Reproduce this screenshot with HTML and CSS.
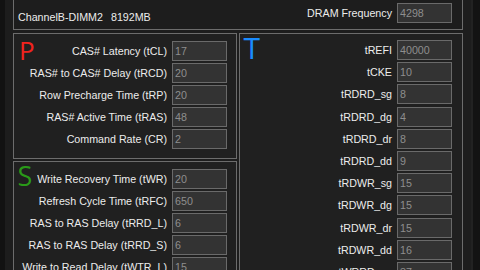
FILE: index.html
```html
<!DOCTYPE html>
<html lang="en">
<head>
  <meta charset="UTF-8">
  <meta name="viewport" content="width=device-width, initial-scale=1.0">
  <title>Memory Timings</title>
  <link rel="stylesheet" href="styles.css">
</head>
<body>
  <div class="edge"></div>
  <div class="main">
    <div class="summary">
      <div class="module">ChannelB-DIMM2<span class="size">8192MB</span></div>
      <div class="row freq">
        <span class="label">DRAM Frequency</span>
        <span class="val">4298</span>
      </div>
    </div>
    <div class="groups">
      <div class="col">
        <section class="panel primary">
          <span class="mark red">P</span>
          <div class="row"><span class="label">CAS# Latency (tCL)</span><span class="val">17</span></div>
          <div class="row"><span class="label">RAS# to CAS# Delay (tRCD)</span><span class="val">20</span></div>
          <div class="row"><span class="label">Row Precharge Time (tRP)</span><span class="val">20</span></div>
          <div class="row"><span class="label">RAS# Active Time (tRAS)</span><span class="val">48</span></div>
          <div class="row"><span class="label">Command Rate (CR)</span><span class="val">2</span></div>
        </section>
        <section class="panel secondary">
          <span class="mark green">S</span>
          <div class="row"><span class="label">Write Recovery Time (tWR)</span><span class="val">20</span></div>
          <div class="row"><span class="label">Refresh Cycle Time (tRFC)</span><span class="val">650</span></div>
          <div class="row"><span class="label">RAS to RAS Delay (tRRD_L)</span><span class="val">6</span></div>
          <div class="row"><span class="label">RAS to RAS Delay (tRRD_S)</span><span class="val">6</span></div>
          <div class="row"><span class="label">Write to Read Delay (tWTR_L)</span><span class="val">15</span></div>
        </section>
      </div>
      <section class="panel tertiary">
        <span class="mark blue">T</span>
        <div class="row"><span class="label">tREFI</span><span class="val">40000</span></div>
        <div class="row"><span class="label">tCKE</span><span class="val">10</span></div>
        <div class="row"><span class="label">tRDRD_sg</span><span class="val">8</span></div>
        <div class="row"><span class="label">tRDRD_dg</span><span class="val">4</span></div>
        <div class="row"><span class="label">tRDRD_dr</span><span class="val">8</span></div>
        <div class="row"><span class="label">tRDRD_dd</span><span class="val">9</span></div>
        <div class="row"><span class="label">tRDWR_sg</span><span class="val">15</span></div>
        <div class="row"><span class="label">tRDWR_dg</span><span class="val">15</span></div>
        <div class="row"><span class="label">tRDWR_dr</span><span class="val">15</span></div>
        <div class="row"><span class="label">tRDWR_dd</span><span class="val">16</span></div>
        <div class="row"><span class="label">tWRRD_sg</span><span class="val">37</span></div>
      </section>
    </div>
  </div>
  <div class="gutter"></div>
  <div class="scroll"></div>
</body>
</html>
```

FILE: styles.css
```css
body {
  margin: 0;
  height: 270px;
  overflow: hidden;
  display: flex;
  background-color: #1d1d1d;
  color: #ececec;
  font-family: "Liberation Sans", Arial, sans-serif;
  font-size: 10.7px;
}
.edge {
  width: 5px;
  background: #121212;
}
.main {
  width: 450px;
  margin-left: 8px;
}
.gutter {
  width: 8px;
}
.scroll {
  flex: 1;
  background: #131313;
  border-left: 2px solid #222;
}
.summary {
  height: 30px;
  border: 1px solid #6c6c6c;
  border-top: none;
  box-sizing: border-box;
  display: flex;
  justify-content: space-between;
  padding: 0 10px 0 4px;
}
.module {
  margin-top: 11px;
}
.size {
  margin-left: 8px;
}
.freq {
  margin-top: 3px;
  height: 20px;
}
.groups {
  display: flex;
  gap: 2px;
  margin-top: 3px;
}
.col {
  display: flex;
  flex-direction: column;
  gap: 2px;
}
.panel {
  position: relative;
  width: 224px;
  box-sizing: border-box;
  border: 1px solid #6c6c6c;
  background: #202020;
  display: flex;
  flex-direction: column;
  gap: 2px;
  padding: 7px 9px 8px 0;
}
.primary {
  height: 126px;
}
.secondary {
  height: 120px;
  padding-top: 7px;
}
.tertiary {
  height: 240px;
  gap: 2.2px;
  padding: 6px 10px 0 0;
}
.row {
  display: flex;
  justify-content: flex-end;
  align-items: center;
  gap: 5px;
  height: 20px;
  flex-shrink: 0;
}
.label {
  white-space: nowrap;
}
.val {
  width: 55px;
  height: 20px;
  box-sizing: border-box;
  border: 1px solid #6a6a6a;
  background: #333;
  color: #8e8e8e;
  padding-left: 2px;
  line-height: 18px;
}
.mark {
  position: absolute;
  font-family: "Open Sans", sans-serif;
  font-weight: 400;
  line-height: 1;
}
.red {
  color: #f0231e;
  font-size: 26px;
  left: 5px;
  top: 2.5px;
}
.green {
  color: #2a9a18;
  font-size: 27px;
  left: 3.5px;
  top: 0;
}
.blue {
  color: #1a8cff;
  font-size: 30px;
  left: 3.5px;
  top: -1px;
}
```
